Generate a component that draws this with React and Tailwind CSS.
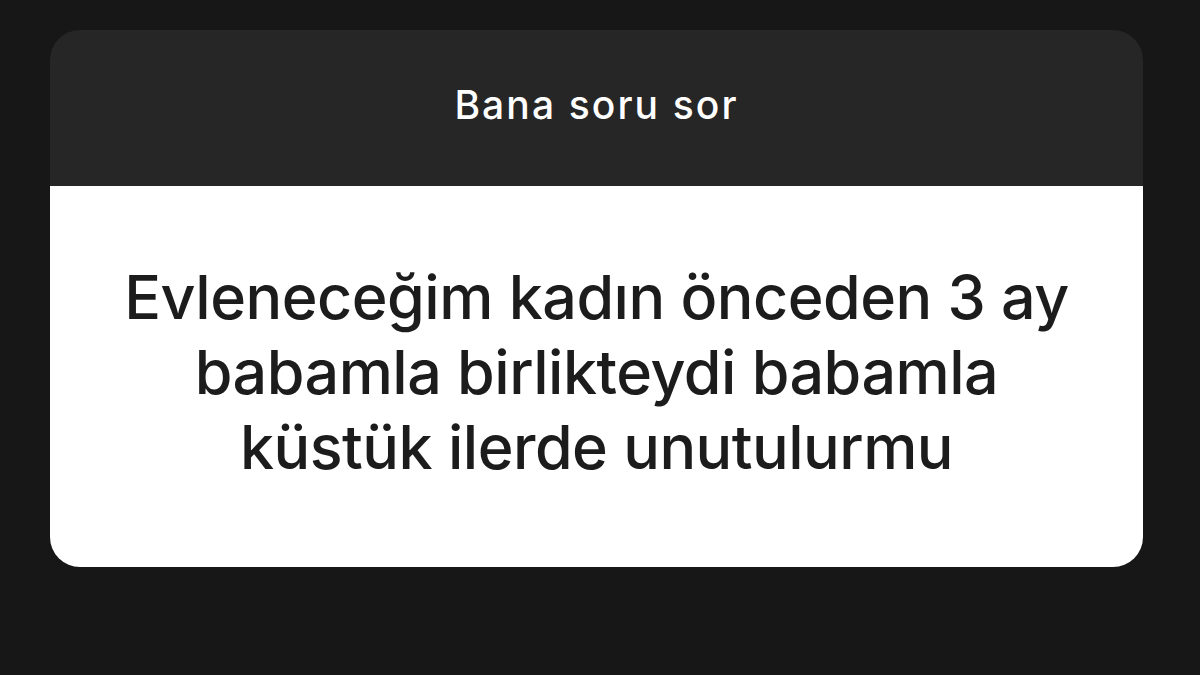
export default function App() {
  return (
    <div className="w-[1200px] h-[675px] bg-[#171717] pt-[30px] pl-[50px]" style={{ fontFamily: 'Inter, "Noto Sans", sans-serif' }}>
      <div className="w-[1093px] h-[537px] rounded-[30px] overflow-hidden flex flex-col">
        <div className="h-[156px] bg-[#262626] flex items-center justify-center">
          <span className="text-white text-[39px] font-medium tracking-[2.1px] pb-[5px]">Bana soru sor</span>
        </div>
        <div className="flex-1 bg-white flex items-center justify-center pb-[8px]">
          <p className="text-[#1c1c1c] text-[61px] font-[450] tracking-[-0.5px] leading-[75px] text-center">
            Evleneceğim kadın önceden 3 ay<br />
            babamla birlikteydi babamla<br />
            küstük ilerde unutulurmu
          </p>
        </div>
      </div>
    </div>
  )
}
